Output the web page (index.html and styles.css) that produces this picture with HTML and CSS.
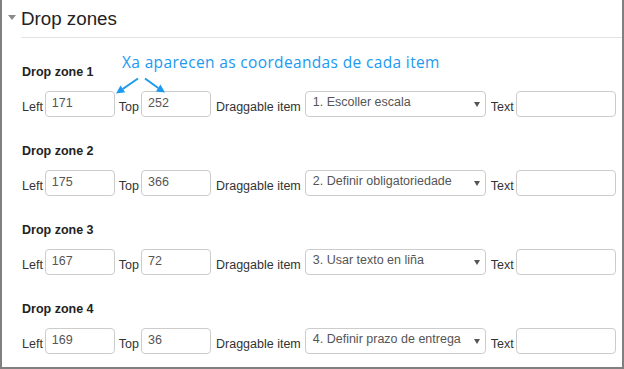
FILE: index.html
```html
<!DOCTYPE html>
<html lang="en">
  <head>
    <meta charset="UTF-8" />
    <meta name="viewport" content="width=device-width, initial-scale=1.0" />
    <title>Drop zones</title>
    <link rel="stylesheet" href="styles.css">
  </head>
  <body>
    <div class="frame">
      <div class="legend">
        <span class="legend-caret"></span>
        <span class="legend-title">Drop zones</span>
      </div>

      <div class="zones">
        <div class="zone">
          <div class="zone-title">Drop zone 1</div>
          <div class="zone-row">
            <span class="label label-left">Left</span>
            <div class="input input-coord">171</div>
            <span class="label label-top">Top</span>
            <div class="input input-coord">252</div>
            <span class="label label-item">Draggable item</span>
            <div class="select"><span>1. Escoller escala</span><span class="select-caret"></span></div>
            <span class="label label-text">Text</span>
            <div class="input input-text"></div>
          </div>
        </div>

        <div class="zone">
          <div class="zone-title">Drop zone 2</div>
          <div class="zone-row">
            <span class="label label-left">Left</span>
            <div class="input input-coord">175</div>
            <span class="label label-top">Top</span>
            <div class="input input-coord">366</div>
            <span class="label label-item">Draggable item</span>
            <div class="select"><span>2. Definir obligatoriedade</span><span class="select-caret"></span></div>
            <span class="label label-text">Text</span>
            <div class="input input-text"></div>
          </div>
        </div>

        <div class="zone">
          <div class="zone-title">Drop zone 3</div>
          <div class="zone-row">
            <span class="label label-left">Left</span>
            <div class="input input-coord">167</div>
            <span class="label label-top">Top</span>
            <div class="input input-coord">72</div>
            <span class="label label-item">Draggable item</span>
            <div class="select"><span>3. Usar texto en liña</span><span class="select-caret"></span></div>
            <span class="label label-text">Text</span>
            <div class="input input-text"></div>
          </div>
        </div>

        <div class="zone">
          <div class="zone-title">Drop zone 4</div>
          <div class="zone-row">
            <span class="label label-left">Left</span>
            <div class="input input-coord">169</div>
            <span class="label label-top">Top</span>
            <div class="input input-coord">36</div>
            <span class="label label-item">Draggable item</span>
            <div class="select"><span>4. Definir prazo de entrega</span><span class="select-caret"></span></div>
            <span class="label label-text">Text</span>
            <div class="input input-text"></div>
          </div>
        </div>
      </div>

      <!-- annotation drawn over the form -->
      <div class="note">Xa aparecen as coordeandas de cada item</div>
      <svg class="note-arrows" width="60" height="24" viewBox="0 0 60 24">
        <line x1="28" y1="6.5" x2="12.7" y2="17" stroke="#1b9af0" stroke-width="2" />
        <polygon points="6,21.5 15.2,20.3 10.5,13.4" fill="#1b9af0" />
        <line x1="35" y1="6.5" x2="48.2" y2="16" stroke="#1b9af0" stroke-width="2" />
        <polygon points="55,20.5 45.9,19.5 50.4,12.6" fill="#1b9af0" />
      </svg>
    </div>
  </body>
</html>
```

FILE: styles.css
```css
html,
body {
  margin: 0;
  padding: 0;
  background: #fff;
}

body {
  width: 624px;
  height: 369px;
  overflow: hidden;
  font-family: "Liberation Sans", Arial, sans-serif;
  color: #333;
}

.frame {
  position: relative;
  box-sizing: border-box;
  width: 624px;
  height: 369px;
  border: 2px solid #808080;
  border-top: none;
}

/* Legend */
.legend {
  display: flex;
  align-items: flex-start;
  margin-left: 19px;
  padding: 8px 0 7px 0;
  border-bottom: 1px solid #e3e3e3;
}

.legend-caret {
  width: 0;
  height: 0;
  margin: 7px 5px 0 -13px;
  border-left: 4px solid transparent;
  border-right: 4px solid transparent;
  border-top: 5px solid #8a8a8a;
}

.legend-title {
  font-size: 18.75px;
  line-height: 22px;
  color: #222;
}

/* Drop zones */
.zones {
  padding: 27px 0 0 20px;
}

.zone {
  margin-bottom: 27px;
}

.zone-title {
  font-size: 12.5px;
  line-height: 15px;
  font-weight: bold;
  color: #222;
  margin-bottom: 11px;
}

.zone-row {
  display: flex;
  align-items: flex-end;
}

.label {
  font-size: 12.5px;
  line-height: 15px;
  padding-bottom: 2px;
  margin-right: 2px;
  color: #333;
}

.label-item {
  margin-left: 1px;
  margin-right: 4px;
}

.input,
.select {
  box-sizing: border-box;
  height: 26px;
  border: 1px solid #ccc;
  border-radius: 4px;
  font-size: 12.5px;
  line-height: 15px;
  color: #555;
  margin-right: 4px;
}

.input {
  padding: 4px 6px 5px 6px;
}

.input-coord {
  width: 70px;
}

.input-text {
  width: 100px;
  margin-right: 0;
}

.select {
  display: flex;
  align-items: center;
  justify-content: space-between;
  width: 181px;
  padding: 0 5px 0 7px;
  margin-right: 5px;
}

.select span:first-child {
  margin-top: -3px;
}

.select-caret {
  width: 0;
  height: 0;
  border-left: 3px solid transparent;
  border-right: 3px solid transparent;
  border-top: 5px solid #555;
}

/* Annotation */
.note {
  position: absolute;
  left: 120px;
  top: 52px;
  font-family: "Open Sans", sans-serif;
  font-size: 15.5px;
  letter-spacing: 0.35px;
  line-height: 20px;
  color: #1b9af0;
  white-space: nowrap;
}

.note-arrows {
  position: absolute;
  left: 108px;
  top: 72px;
}
```
